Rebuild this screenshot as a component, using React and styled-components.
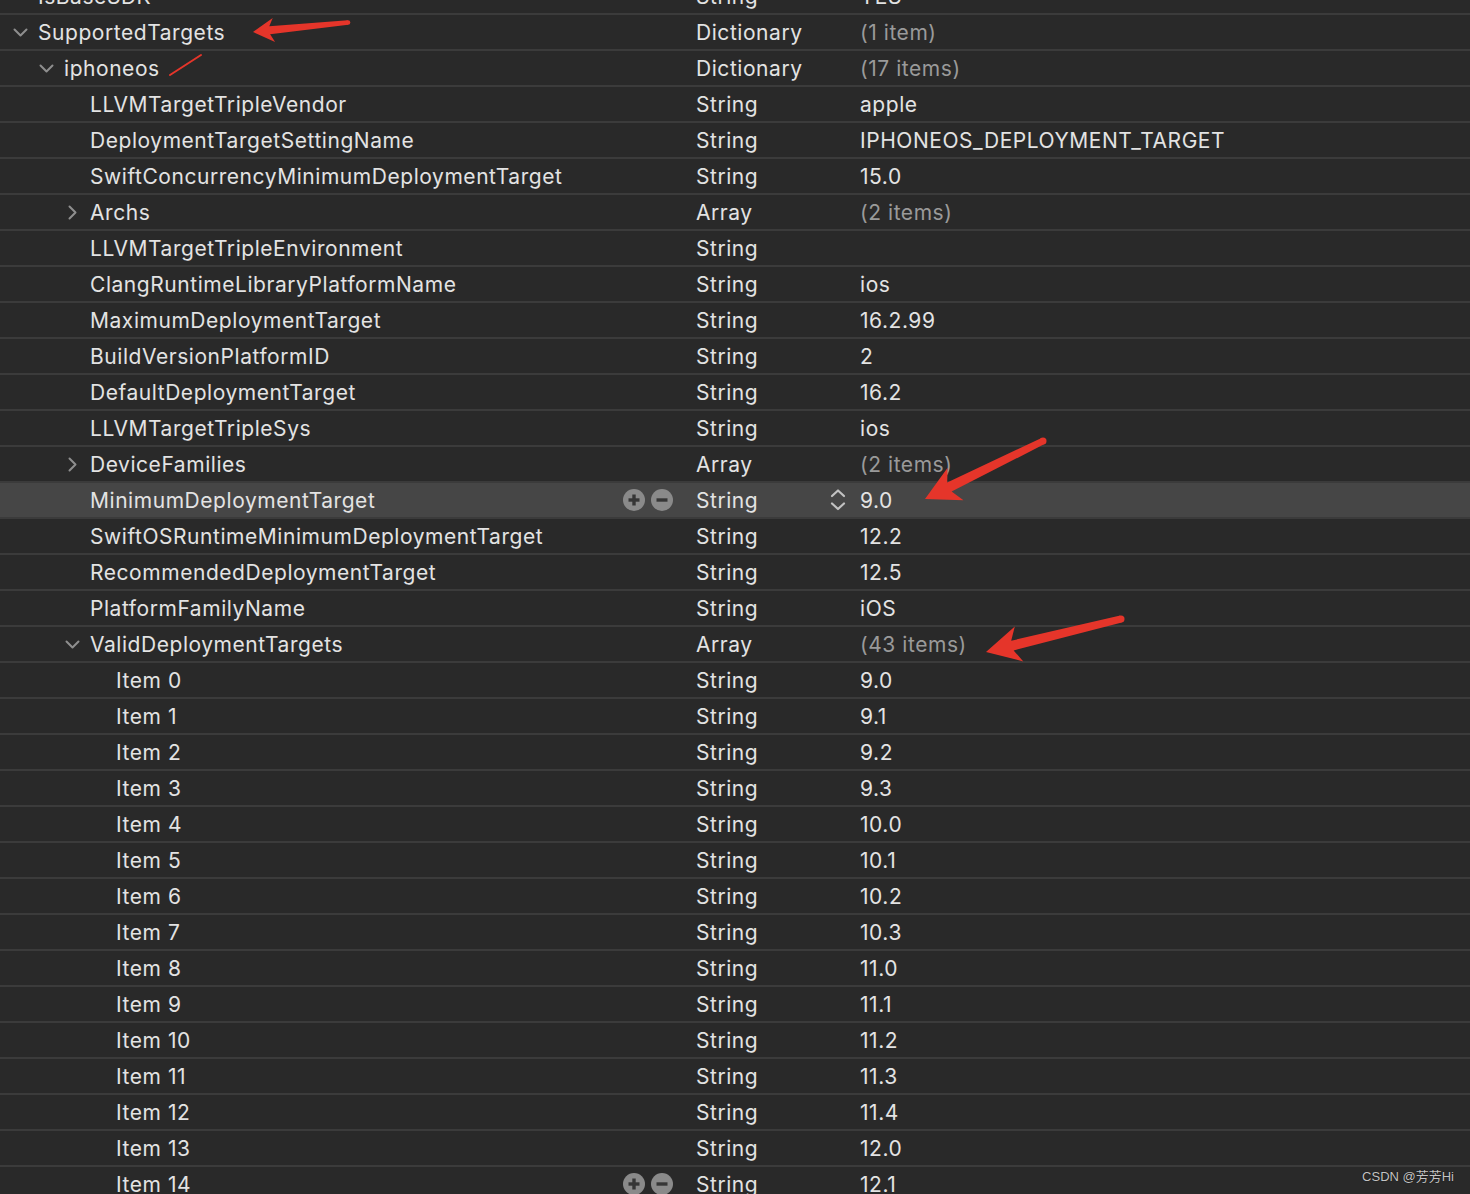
import styled, { createGlobalStyle } from "styled-components";

const GlobalStyle = createGlobalStyle`
  html, body {
    margin: 0;
    padding: 0;
    background: #292929;
  }
  body {
    font-family: Inter, "Noto Sans", "Liberation Sans", sans-serif;
    overflow: hidden;
  }
`;

const Page = styled.div`
  position: relative;
  width: 1470px;
  height: 1194px;
  overflow: hidden;
  background: #292929;
`;

const List = styled.div`
  display: flex;
  flex-direction: column;
  margin-top: -21px;
`;

const Row = styled.div`
  display: grid;
  grid-template-columns: 696px 164px 1fr;
  height: 34px;
  align-items: center;
  border-bottom: 2px solid #3b3b3b;
  background: ${(p) => (p.$selected ? "#464646" : "#292929")};
  color: #e3e3e3;
  font-size: 21px;
  letter-spacing: 0.55px;
`;

const KeyCell = styled.div`
  display: flex;
  align-items: center;
  height: 100%;
  padding-left: ${(p) => 12 + p.$level * 26}px;
  padding-right: 23px;
  box-sizing: border-box;
`;

const Disclosure = styled.span`
  display: flex;
  align-items: center;
  justify-content: center;
  width: 16px;
  margin-right: 10px;
  flex-shrink: 0;
`;

const KeyText = styled.span`
  white-space: nowrap;
`;

const Actions = styled.span`
  margin-left: auto;
  display: flex;
  gap: 6px;
`;

const TypeCell = styled.div`
  display: flex;
  align-items: center;
  justify-content: space-between;
  padding-right: 14px;
  height: 100%;
`;

const ValueCell = styled.div`
  color: ${(p) => (p.$dim ? "#9a9a9a" : "#e3e3e3")};
  white-space: nowrap;
`;

const Overlay = styled.svg`
  position: absolute;
  left: 0;
  top: 0;
  pointer-events: none;
`;

const Watermark = styled.div`
  position: absolute;
  right: 16px;
  bottom: 9px;
  font-family: "Liberation Sans", "Noto Sans CJK SC", sans-serif;
  font-size: 13px;
  color: #c4c4c4;
  text-shadow: 0 0 1px #000;
`;

function Chevron({ open }) {
  return open ? (
    <svg width="15" height="9" viewBox="0 0 15 9">
      <polyline points="1.5,1.5 7.5,7.5 13.5,1.5" fill="none" stroke="#8e8e8e" strokeWidth="2" strokeLinecap="round" strokeLinejoin="round" />
    </svg>
  ) : (
    <svg width="9" height="15" viewBox="0 0 9 15">
      <polyline points="1.5,1.5 7.5,7.5 1.5,13.5" fill="none" stroke="#8e8e8e" strokeWidth="2" strokeLinecap="round" strokeLinejoin="round" />
    </svg>
  );
}

function RoundButton({ plus }) {
  return (
    <svg width="22" height="22" viewBox="0 0 22 22">
      <circle cx="11" cy="11" r="11" fill="#8a8a8a" />
      <line x1="5.5" y1="11" x2="16.5" y2="11" stroke="#363636" strokeWidth="3.4" />
      {plus && <line x1="11" y1="5.5" x2="11" y2="16.5" stroke="#363636" strokeWidth="3.4" />}
    </svg>
  );
}

function Stepper() {
  return (
    <svg width="16" height="22" viewBox="0 0 16 22">
      <polyline points="2,7 8,1.5 14,7" fill="none" stroke="#c2c2c2" strokeWidth="2.2" strokeLinecap="round" strokeLinejoin="round" />
      <polyline points="2,14.5 8,20 14,14.5" fill="none" stroke="#c2c2c2" strokeWidth="2.2" strokeLinecap="round" strokeLinejoin="round" />
    </svg>
  );
}

function arrowPoints(tx, ty, hx, hy, headLen, headHalf, shaftHead, shaftTail) {
  const dx = hx - tx;
  const dy = hy - ty;
  const len = Math.hypot(dx, dy);
  const ux = dx / len;
  const uy = dy / len;
  const nx = -uy;
  const ny = ux;
  const bx = hx - ux * (headLen * 0.8);
  const by = hy - uy * (headLen * 0.8);
  const wx = hx - ux * headLen;
  const wy = hy - uy * headLen;
  const pts = [
    [hx, hy],
    [wx + nx * headHalf, wy + ny * headHalf],
    [bx + nx * shaftHead / 2, by + ny * shaftHead / 2],
    [tx + nx * shaftTail / 2, ty + ny * shaftTail / 2],
    [tx - nx * shaftTail / 2, ty - ny * shaftTail / 2],
    [bx - nx * shaftHead / 2, by - ny * shaftHead / 2],
    [wx - nx * headHalf, wy - ny * headHalf],
  ];
  return pts.map((p) => p.map((v) => v.toFixed(1)).join(",")).join(" ");
}

const RED = "#e5352a";

const items = [
  "9.0", "9.1", "9.2", "9.3", "10.0", "10.1", "10.2", "10.3",
  "11.0", "11.1", "11.2", "11.3", "11.4", "12.0", "12.1",
];

const rows = [
  { level: 0, key: "IsBaseSDK", type: "String", value: "YES" },
  { level: 0, key: "SupportedTargets", type: "Dictionary", value: "(1 item)", dim: true, open: true },
  { level: 1, key: "iphoneos", type: "Dictionary", value: "(17 items)", dim: true, open: true },
  { level: 2, key: "LLVMTargetTripleVendor", type: "String", value: "apple" },
  { level: 2, key: "DeploymentTargetSettingName", type: "String", value: "IPHONEOS_DEPLOYMENT_TARGET" },
  { level: 2, key: "SwiftConcurrencyMinimumDeploymentTarget", type: "String", value: "15.0" },
  { level: 2, key: "Archs", type: "Array", value: "(2 items)", dim: true, open: false },
  { level: 2, key: "LLVMTargetTripleEnvironment", type: "String", value: "" },
  { level: 2, key: "ClangRuntimeLibraryPlatformName", type: "String", value: "ios" },
  { level: 2, key: "MaximumDeploymentTarget", type: "String", value: "16.2.99" },
  { level: 2, key: "BuildVersionPlatformID", type: "String", value: "2" },
  { level: 2, key: "DefaultDeploymentTarget", type: "String", value: "16.2" },
  { level: 2, key: "LLVMTargetTripleSys", type: "String", value: "ios" },
  { level: 2, key: "DeviceFamilies", type: "Array", value: "(2 items)", dim: true, open: false },
  { level: 2, key: "MinimumDeploymentTarget", type: "String", value: "9.0", selected: true, actions: true, stepper: true },
  { level: 2, key: "SwiftOSRuntimeMinimumDeploymentTarget", type: "String", value: "12.2" },
  { level: 2, key: "RecommendedDeploymentTarget", type: "String", value: "12.5" },
  { level: 2, key: "PlatformFamilyName", type: "String", value: "iOS" },
  { level: 2, key: "ValidDeploymentTargets", type: "Array", value: "(43 items)", dim: true, open: true },
  ...items.map((v, i) => ({
    level: 3,
    key: `Item ${i}`,
    type: "String",
    value: v,
    actions: i === 14,
  })),
];

export default function App() {
  return (
    <Page>
      <GlobalStyle />
      <List>
        {rows.map((r, i) => (
          <Row key={i} $selected={r.selected}>
            <KeyCell $level={r.level}>
              <Disclosure>{r.open !== undefined && <Chevron open={r.open} />}</Disclosure>
              <KeyText>{r.key}</KeyText>
              {r.actions && (
                <Actions>
                  <RoundButton plus />
                  <RoundButton />
                </Actions>
              )}
            </KeyCell>
            <TypeCell>
              <span>{r.type}</span>
              {r.stepper && <Stepper />}
            </TypeCell>
            <ValueCell $dim={r.dim}>{r.value}</ValueCell>
          </Row>
        ))}
      </List>
      <Overlay width="1470" height="1194" viewBox="0 0 1470 1194">
        <polygon points={arrowPoints(348, 22.5, 253, 32, 21, 12, 8, 4.5)} fill={RED} />
        <circle cx="348" cy="22.5" r="2.3" fill={RED} />
        <line x1="201" y1="55" x2="170" y2="75" stroke={RED} strokeWidth="2" strokeLinecap="round" />
        <polygon points={arrowPoints(1043, 441, 925, 499, 34, 18, 10, 7)} fill={RED} />
        <circle cx="1043" cy="441" r="3.5" fill={RED} />
        <polygon points={arrowPoints(1121, 619, 986, 652, 34, 18, 10, 7)} fill={RED} />
        <circle cx="1121" cy="619" r="3.5" fill={RED} />
      </Overlay>
      <Watermark>CSDN @芳芳Hi</Watermark>
    </Page>
  );
}
